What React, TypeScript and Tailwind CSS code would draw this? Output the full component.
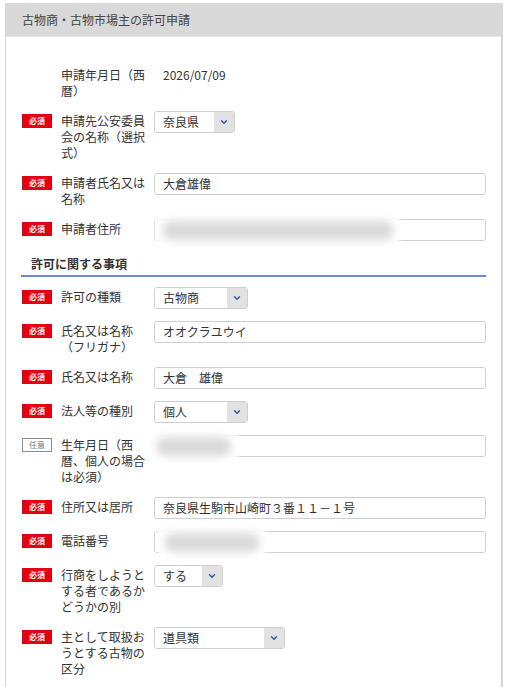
import { ChevronDown } from "lucide-react";

type Field =
	| { kind: "text"; value: string }
	| { kind: "input"; value?: string; blur?: { left: number; width: number } }
	| { kind: "select"; value: string; width: string };

interface Row {
	badge?: "required" | "optional";
	label: string;
	field: Field;
}

const applicantRows: Row[] = [
	{ label: "申請年月日（西暦）", field: { kind: "text", value: "2026/07/09" } },
	{
		badge: "required",
		label: "申請先公安委員会の名称（選択式）",
		field: { kind: "select", value: "奈良県", width: "w-[81px]" },
	},
	{ badge: "required", label: "申請者氏名又は名称", field: { kind: "input", value: "大倉雄偉" } },
	{
		badge: "required",
		label: "申請者住所",
		field: { kind: "input", blur: { left: 4, width: 238 } },
	},
];

const permitRows: Row[] = [
	{
		badge: "required",
		label: "許可の種類",
		field: { kind: "select", value: "古物商", width: "w-[94px]" },
	},
	{ badge: "required", label: "氏名又は名称（フリガナ）", field: { kind: "input", value: "オオクラユウイ" } },
	{ badge: "required", label: "氏名又は名称", field: { kind: "input", value: "大倉　雄偉" } },
	{
		badge: "required",
		label: "法人等の種別",
		field: { kind: "select", value: "個人", width: "w-[94px]" },
	},
	{
		badge: "optional",
		label: "生年月日（西暦、個人の場合は必須）",
		field: { kind: "input", blur: { left: -2, width: 82 } },
	},
	{
		badge: "required",
		label: "住所又は居所",
		field: { kind: "input", value: "奈良県生駒市山崎町３番１１－１号" },
	},
	{
		badge: "required",
		label: "電話番号",
		field: { kind: "input", blur: { left: 6, width: 102 } },
	},
	{
		badge: "required",
		label: "行商をしようとする者であるかどうかの別",
		field: { kind: "select", value: "する", width: "w-[69px]" },
	},
	{
		badge: "required",
		label: "主として取扱おうとする古物の区分",
		field: { kind: "select", value: "道具類", width: "w-[131px]" },
	},
];

function Badge({ type }: { type?: Row["badge"] }) {
	if (!type) return null;
	if (type === "optional") {
		return (
			<span className="mt-[3px] ml-[1px] flex h-[14px] w-[30px] items-center justify-center border border-[#8a8a8a] bg-white text-[8px] leading-none text-[#777]">
				任意
			</span>
		);
	}
	return (
		<span className="mt-[3px] ml-[1px] flex h-[14px] w-[30px] items-center justify-center bg-[#e00012] text-[8px] font-bold leading-none text-white">
			必須
		</span>
	);
}

function FieldCell({ field }: { field: Field }) {
	if (field.kind === "text") {
		return <div className="pt-[2px] pl-[9px] leading-[16px]">{field.value}</div>;
	}

	if (field.kind === "select") {
		return (
			<div
				className={`flex h-[22px] ${field.width} items-stretch overflow-hidden rounded-[3px] border border-[#cfcfcf] bg-white`}
			>
				<span className="flex flex-1 items-center pl-[8px]">{field.value}</span>
				<span className="flex w-[20px] items-center justify-center bg-[#e2e2e2]">
					<ChevronDown className="h-[10px] w-[10px] text-[#2f5aa8]" strokeWidth={3.5} />
				</span>
			</div>
		);
	}

	return (
		<div className="relative flex h-[22px] w-full items-center rounded-[3px] border border-[#cfcfcf] bg-white pl-[8px]">
			{field.value}
			{field.blur && (
				<>
					<span
						className="absolute -top-[3px] h-[27px] rounded-[6px] bg-white blur-[2px]"
						style={{ left: field.blur.left - 4, width: field.blur.width + 8 }}
					/>
					<span
						className="absolute top-[1px] h-[19px] rounded-[8px] bg-[#dadada] blur-[4px]"
						style={{ left: field.blur.left + 4, width: field.blur.width - 8 }}
					/>
				</>
			)}
		</div>
	);
}

function FormRow({ row }: { row: Row }) {
	return (
		<div className="mb-[12px] flex items-start">
			<div className="w-[40px] shrink-0">
				<Badge type={row.badge} />
			</div>
			<div className="w-[86px] shrink-0 pt-[2px] leading-[16px]">{row.label}</div>
			<div className="ml-[7px] min-w-0 flex-1">
				<FieldCell field={row.field} />
			</div>
		</div>
	);
}

export default function App() {
	return (
		<div className="min-h-[687px] bg-white pt-[3px] font-['Noto_Sans_CJK_JP','Liberation_Sans',sans-serif] text-[12px] text-[#333]">
			<div className="ml-[5px] min-h-[684px] w-[498px] border-r-2 border-l border-[#d6d6d6]">
				{/* ヘッダー */}
				<div className="flex h-[34px] items-center border-b border-[#e8e8e8] bg-[#d9d9d9] pl-[16px] text-[#444]">
					古物商・古物市場主の許可申請
				</div>

				<div className="px-[15px] pt-[28px] pb-[20px]">
					{applicantRows.map((row) => (
						<FormRow key={row.label} row={row} />
					))}

					{/* 許可に関する事項 */}
					<div className="mb-[10px] border-b-2 border-[#6a8bd0] pt-[4px] pb-[4px] pl-[10px] font-bold leading-[14px]">
						許可に関する事項
					</div>

					{permitRows.map((row) => (
						<FormRow key={row.label} row={row} />
					))}
				</div>
			</div>
		</div>
	);
}
